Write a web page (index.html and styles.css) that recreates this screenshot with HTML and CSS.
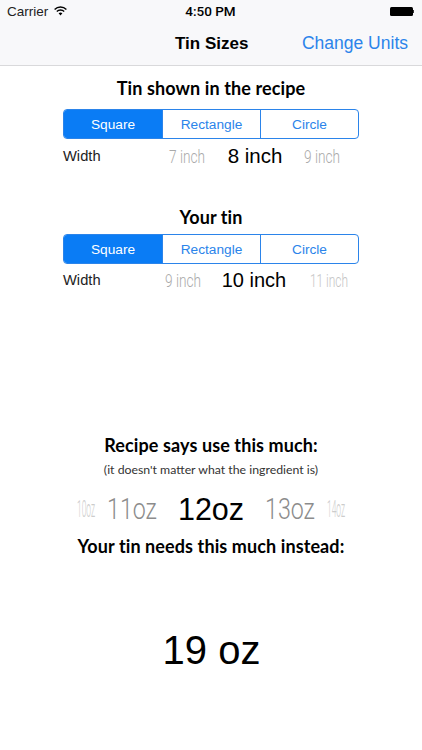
FILE: index.html
```html
<!DOCTYPE html>
<html lang="en">
<head>
  <meta charset="UTF-8">
  <title>Tin Sizes</title>
  <link rel="stylesheet" href="styles.css">
</head>
<body>

<header class="top">
  <div class="status-bar">
    <div class="carrier">
      <span>Carrier</span>
      <svg class="wifi" width="13" height="10" viewBox="0 0 13 10">
        <path d="M0.6 3.4a8.4 8.4 0 0 1 11.8 0" fill="none" stroke="#000" stroke-width="1.4"/>
        <path d="M2.8 5.5a5.3 5.3 0 0 1 7.4 0" fill="none" stroke="#000" stroke-width="1.4"/>
        <path d="M4.6 7.2l1.9 2.3 1.9-2.3a2.9 2.9 0 0 0-3.8 0z" fill="#000"/>
      </svg>
    </div>
    <div class="clock">4:50 PM</div>
    <div class="battery"><span class="battery-body"></span><span class="battery-nub"></span></div>
  </div>
  <nav class="nav-bar">
    <div class="nav-title">Tin Sizes</div>
    <a class="nav-action">Change Units</a>
  </nav>
</header>

<main>
  <section class="tin tin-recipe">
    <h2>Tin shown in the recipe</h2>
    <div class="segments">
      <div class="segment active">Square</div>
      <div class="segment">Rectangle</div>
      <div class="segment">Circle</div>
    </div>
    <div class="width-row row-recipe">
      <span class="width-label">Width</span>
      <span class="pick side">7 inch</span>
      <span class="pick current">8 inch</span>
      <span class="pick side">9 inch</span>
    </div>
  </section>

  <section class="tin tin-yours">
    <h2>Your tin</h2>
    <div class="segments">
      <div class="segment active">Square</div>
      <div class="segment">Rectangle</div>
      <div class="segment">Circle</div>
    </div>
    <div class="width-row row-yours">
      <span class="width-label">Width</span>
      <span class="pick side">9 inch</span>
      <span class="pick current big">10 inch</span>
      <span class="pick side faint">11 inch</span>
    </div>
  </section>

  <section class="amount">
    <h2>Recipe says use this much:</h2>
    <p class="note">(it doesn't matter what the ingredient is)</p>
    <div class="oz-picker">
      <span class="oz far">10oz</span>
      <span class="oz near">11oz</span>
      <span class="oz now">12oz</span>
      <span class="oz near">13oz</span>
      <span class="oz far">14oz</span>
    </div>
    <h2>Your tin needs this much instead:</h2>
    <div class="result">19 oz</div>
  </section>
</main>

</body>
</html>
```

FILE: styles.css
```css
body {
  margin: 0;
  background: #fff;
  color: #000;
  font-family: "Liberation Sans", Arial, sans-serif;
}
.top {
  background-color: #f8f8fa;
  border-bottom: 1px solid #d9d9db;
  height: 65px;
}
.status-bar {
  display: grid;
  grid-template-columns: 1fr auto 1fr;
  align-items: center;
  height: 22px;
  padding: 0 8px 0 7px;
  font-size: 13.5px;
}
.carrier {
  display: flex;
  align-items: center;
  gap: 6px;
  color: #222;
}
.clock {
  font-family: Roboto, sans-serif;
  font-weight: 500;
  font-size: 13.5px;
}
.battery {
  display: flex;
  align-items: center;
  justify-content: flex-end;
}
.battery-body {
  width: 23px;
  height: 9px;
  background: #000;
  border-radius: 1.5px;
}
.battery-nub {
  width: 1.5px;
  height: 3px;
  background: #333;
}
.nav-bar {
  display: flex;
  justify-content: space-between;
  align-items: center;
  height: 43px;
  padding: 0 14px 0 175px;
}
.nav-title {
  font-weight: bold;
  font-size: 17px;
}
.nav-action {
  color: #2b84ea;
  font-size: 17.5px;
}
h2 {
  margin: 0;
  font-family: Lato, sans-serif;
  font-weight: 700;
  font-size: 18px;
  line-height: 22px;
  letter-spacing: 0.1px;
  text-align: center;
}
.tin {
  padding: 0 63px;
}
.tin-recipe {
  padding-top: 11px;
}
.tin-yours {
  padding-top: 34px;
}
.segments {
  display: grid;
  grid-template-columns: 98px 98px 1fr;
  height: 28px;
  margin-top: 10px;
  border: 1px solid #2b84ea;
  border-radius: 4px;
  overflow: hidden;
}
.tin-yours .segments {
  margin-top: 6px;
}
.segment {
  display: flex;
  justify-content: center;
  align-items: center;
  color: #2b84ea;
  font-size: 13.7px;
  border-left: 1px solid #2b84ea;
}
.segment.active {
  background-color: #0a7cf5;
  color: #fff;
  border-left: none;
}
.width-row {
  display: grid;
  align-items: center;
  height: 32px;
  margin-top: 1px;
}
.row-recipe {
  grid-template-columns: 88px 72px 64px 70px;
}
.row-yours {
  grid-template-columns: 88px 64px 78px 72px;
  height: 30px;
}
.width-label {
  font-size: 14.7px;
  color: #222;
}
.pick {
  display: flex;
  justify-content: center;
  white-space: nowrap;
}
.current {
  font-size: 20.5px;
}
.current.big {
  font-size: 20px;
}
.side {
  font-family: Roboto, sans-serif;
  font-weight: 300;
  font-size: 19px;
  color: #aaa;
  transform: scaleX(0.72);
}
.side.faint {
  color: #c4c4c4;
  transform: scaleX(0.63);
}
.amount {
  padding-top: 139px;
}
.note {
  margin: 6px 0 0;
  font-family: Lato, sans-serif;
  font-size: 12.3px;
  line-height: 16px;
  text-align: center;
  color: #333;
}
.oz-picker {
  display: grid;
  grid-template-columns: 18px 74px 84px 74px 18px;
  justify-content: center;
  align-items: center;
  height: 44px;
  margin: 9px 0 4px;
}
.oz {
  display: flex;
  justify-content: center;
  white-space: nowrap;
}
.now {
  font-size: 30.5px;
}
.near {
  font-family: Roboto, sans-serif;
  font-weight: 300;
  font-size: 29px;
  color: #8c8c8c;
  transform: scaleX(0.8);
}
.far {
  font-family: Roboto, sans-serif;
  font-weight: 300;
  font-size: 24px;
  color: #ccc;
  transform: scaleX(0.35);
}
.result {
  margin-top: 70px;
  font-size: 40px;
  line-height: 46px;
  text-align: center;
  padding-left: 1px;
}
```
